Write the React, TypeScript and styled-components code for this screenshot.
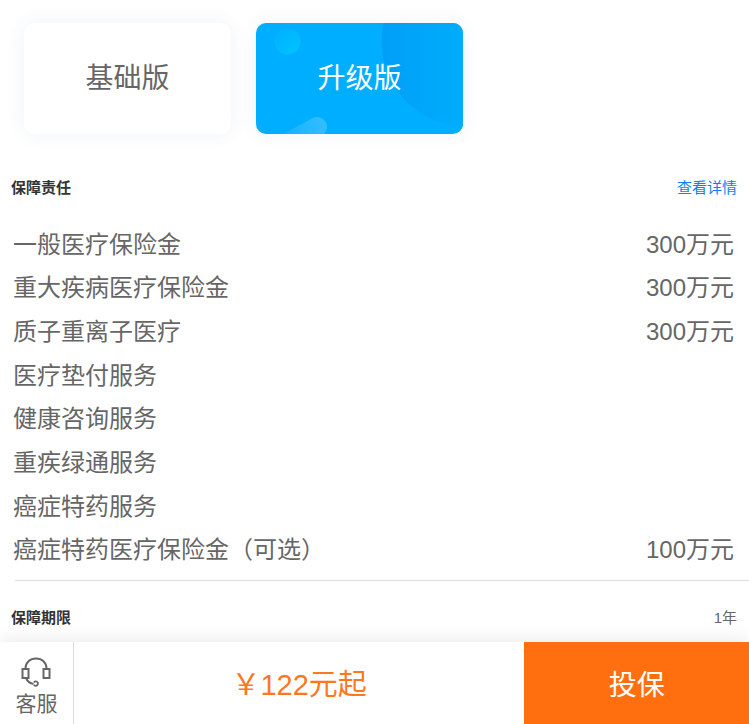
import React, { useState } from "react";
import styled, { createGlobalStyle, css } from "styled-components";

const GlobalStyle = createGlobalStyle`
  *, *::before, *::after { box-sizing: border-box; }
  body {
    margin: 0;
    background: #fff;
    color: #666;
    font-family: "Liberation Sans", "Noto Sans CJK SC", sans-serif;
  }
  button { font: inherit; color: inherit; border: 0; background: none; padding: 0; cursor: pointer; }
`;

const Page = styled.div`
  display: flex;
  flex-direction: column;
  min-height: 100vh;
`;

const Plans = styled.div`
  display: flex;
  gap: 25px;
  padding: 23px 24px 31px;
`;

const PlanCard = styled.button<{ $active: boolean }>`
  display: grid;
  place-items: center;
  width: 207px;
  height: 111px;
  overflow: hidden;
  border-radius: 10px;

  > * { grid-area: 1 / 1; }

  && {
    background: #fff;
    box-shadow: 0 0 20px rgba(0, 80, 110, 0.07);
    font-size: 28px;
    line-height: 42px;
  }

  ${(p) => p.$active && css`
    &&& { background: #00aeff; color: #fff; }
  `}
`;

const PlanArt = styled.svg`
  display: block;
  width: 100%;
  height: 100%;
`;

const SectionHead = styled.div`
  display: flex;
  justify-content: space-between;
  align-items: center;
  padding: 0 12px 0 11px;
  font-size: 15px;
  line-height: 22px;
`;

const CoverageHead = styled(SectionHead)`
  padding-top: 12px;
  padding-bottom: 24px;
`;

const TermRow = styled(SectionHead)`
  padding-top: 26px;
  padding-bottom: 13px;
`;

const Title = styled.h2`
  margin: 0;
  color: #333;
  font-size: 15px;
  font-weight: 700;
`;

const DetailLink = styled.a`
  color: #0a7fff;
  text-decoration: none;
`;

const CoverageTable = styled.table`
  width: 100%;
  height: 349px;
  border-collapse: collapse;
  font-size: 24px;
  line-height: 32px;
`;

const CoverageName = styled.th`
  padding: 0 0 0 13px;
  font-weight: 400;
  text-align: left;
`;

const CoverageAmount = styled.td`
  padding: 0 15px 0 0;
  text-align: right;
`;

const Divider = styled.hr`
  width: calc(100% - 15px);
  height: 1px;
  margin: 8px 0 0 15px;
  border: 0;
  background: #ddd;
`;

const ActionBar = styled.footer`
  position: sticky;
  bottom: 0;
  display: flex;
  height: 82px;
  margin-top: auto;
  background: #fff;
  box-shadow: 0 0 20px rgba(0, 0, 0, 0.1);
`;

const ServiceButton = styled.button`
  display: flex;
  flex-direction: column;
  align-items: center;
  width: 74px;
  && {
    padding-top: 14px;
    border-right: 1px solid #ddd;
    font-size: 21px;
    line-height: 32px;
  }
`;

const Price = styled.div`
  flex: 1;
  display: flex;
  align-items: center;
  justify-content: center;
  padding-bottom: 2px;
  color: #ff781e;
  font-size: 29px;
`;

const BuyButton = styled.button`
  width: 30%;
  && {
    background: #ff6f0f;
    color: #fff;
    font-size: 28px;
  }
`;

const HeadsetIcon = () => (
  <svg width="32" height="32" viewBox="0 0 32 32" fill="none" stroke="#666" strokeWidth="2" aria-hidden="true">
    <path d="M4.500 13V12.500C4.500 6.500 9 2.500 15 2.500s10.500 4 10.500 10V13" />
    <rect x="1.500" y="13" width="6" height="9" />
    <rect x="22.500" y="13" width="6" height="9" />
    <path d="M5 22C6.500 25.500 9 27.500 12.500 28" />
    <path d="M12.900 26.400a2.200 2.200 0 1 1 0 2.400" strokeWidth="1.800" />
  </svg>
);

const CardDecoration = () => (
  <PlanArt viewBox="0 0 207 111" preserveAspectRatio="xMidYMid slice" aria-hidden="true">
    <defs>
      <linearGradient id="arc" gradientUnits="userSpaceOnUse" x1="126" y1="0" x2="207" y2="0">
        <stop offset="0" stopColor="#009ff7" />
        <stop offset="1" stopColor="#00adfb" />
      </linearGradient>
      <linearGradient id="dot" x1="0" y1="0" x2="1" y2="1">
        <stop offset="0" stopColor="#00b1ff" />
        <stop offset="1" stopColor="#00c3ff" />
      </linearGradient>
      <linearGradient id="pill" gradientUnits="userSpaceOnUse" x1="68" y1="98" x2="34" y2="116">
        <stop offset="0" stopColor="#33bdff" />
        <stop offset="1" stopColor="#14b4ff" />
      </linearGradient>
    </defs>
    <circle cx="210.500" cy="18.500" r="85" fill="url(#arc)" />
    <circle cx="31.500" cy="18.500" r="13" fill="url(#dot)" />
    <path d="M61 104L28 122" stroke="url(#pill)" strokeWidth="20" strokeLinecap="round" />
  </PlanArt>
);

const plans = ["基础版", "升级版"];

const coverage = [
  { name: "一般医疗保险金", amount: "300万元" },
  { name: "重大疾病医疗保险金", amount: "300万元" },
  { name: "质子重离子医疗", amount: "300万元" },
  { name: "医疗垫付服务" },
  { name: "健康咨询服务" },
  { name: "重疾绿通服务" },
  { name: "癌症特药服务" },
  { name: "癌症特药医疗保险金（可选）", amount: "100万元" },
];

export default function App() {
  const [selected, setSelected] = useState(1);

  return (
    <>
      <GlobalStyle />
      <Page lang="zh-CN">
        <Plans>
          {plans.map((plan, i) => (
            <PlanCard
              key={plan}
              type="button"
              $active={i === selected}
              aria-pressed={i === selected}
              onClick={() => setSelected(i)}
            >
              {i === selected && <CardDecoration />}
              <span>{plan}</span>
            </PlanCard>
          ))}
        </Plans>
        <CoverageHead>
          <Title>保障责任</Title>
          <DetailLink href="#details">查看详情</DetailLink>
        </CoverageHead>
        <CoverageTable>
          <tbody>
            {coverage.map((item) => (
              <tr key={item.name}>
                <CoverageName scope="row">{item.name}</CoverageName>
                <CoverageAmount>{item.amount}</CoverageAmount>
              </tr>
            ))}
          </tbody>
        </CoverageTable>
        <Divider />
        <TermRow>
          <Title>保障期限</Title>
          <span>1年</span>
        </TermRow>
        <ActionBar>
          <ServiceButton type="button">
            <HeadsetIcon />
            客服
          </ServiceButton>
          <Price>￥122元起</Price>
          <BuyButton type="button">投保</BuyButton>
        </ActionBar>
      </Page>
    </>
  );
}
